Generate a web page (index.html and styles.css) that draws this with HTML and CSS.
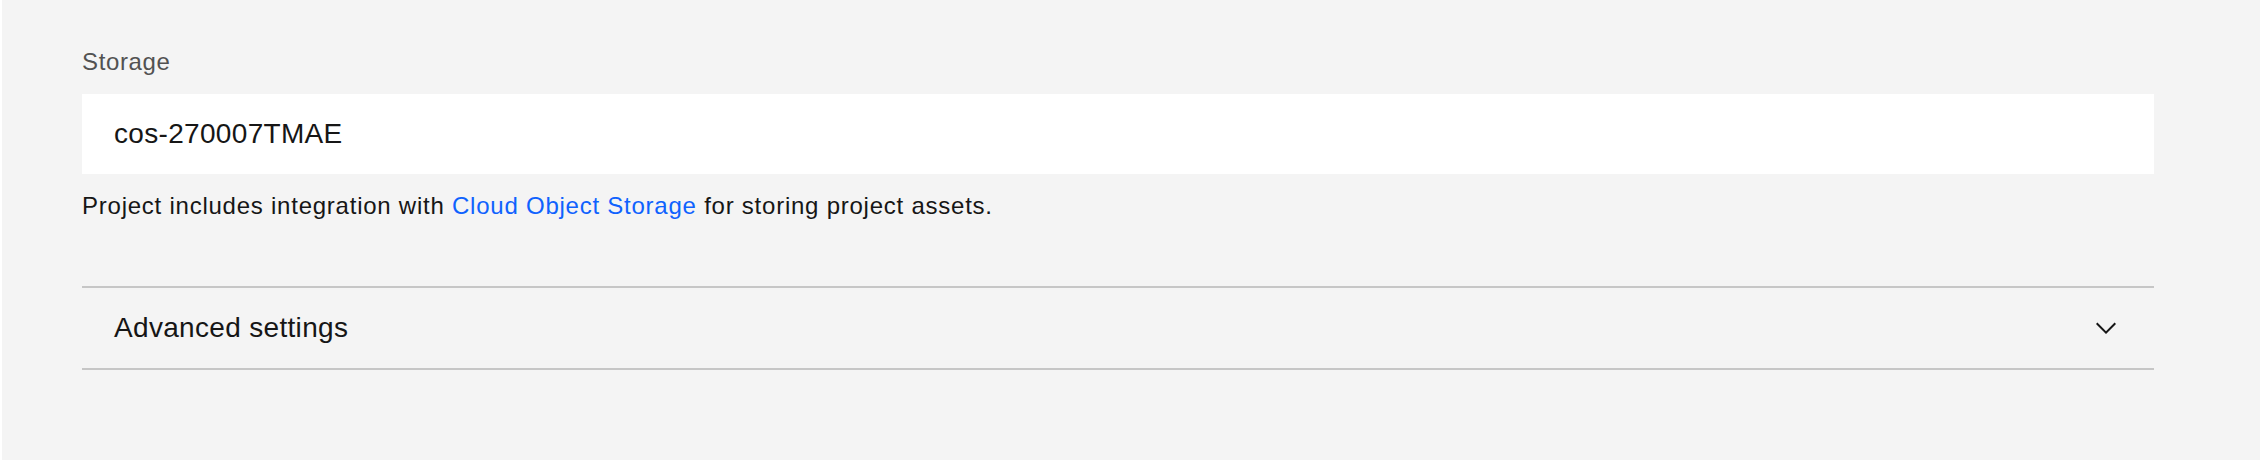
FILE: index.html
```html
<!DOCTYPE html>
<html lang="en">
<head>
<meta charset="utf-8">
<title>Storage</title>
<link rel="stylesheet" href="styles.css">
</head>
<body>
<main class="page">
  <div class="field">
    <label class="field-label" for="storage">Storage</label>
    <div class="field-input" id="storage">cos-270007TMAE</div>
    <p class="field-helper">Project includes integration with <a class="link" href="#">Cloud Object Storage</a> for storing project assets.</p>
  </div>
  <section class="accordion">
    <button class="accordion-heading" type="button">
      <span class="accordion-title">Advanced settings</span>
      <svg class="accordion-arrow" viewBox="0 0 16 16" width="32" height="32" aria-hidden="true">
        <path d="M8 11L3 6 3.7 5.3 8 9.6 12.3 5.3 13 6z" fill="#161616"/>
      </svg>
    </button>
  </section>
</main>
</body>
</html>
```

FILE: styles.css
```css
* {
  box-sizing: border-box;
}

html, body {
  margin: 0;
  padding: 0;
  height: 100%;
}

body {
  font-family: "Liberation Sans", Arial, sans-serif;
  color: #161616;
  background: #f4f4f4;
}

.page {
  min-height: 460px;
  background: #f4f4f4;
  border-left: 2px solid #ffffff;
  padding: 46px 106px 0 80px;
  display: flex;
  flex-direction: column;
}

.field {
  display: flex;
  flex-direction: column;
}

.field-label {
  font-size: 24px;
  line-height: 32px;
  letter-spacing: 0.64px;
  color: #525252;
  margin-bottom: 16px;
}

.field-input {
  height: 80px;
  background: #ffffff;
  padding: 0 32px;
  display: flex;
  align-items: center;
  font-size: 28px;
  line-height: 36px;
  letter-spacing: 0.32px;
  color: #161616;
}

.field-helper {
  margin: 16px 0 0;
  font-size: 24px;
  line-height: 32px;
  letter-spacing: 0.76px;
  color: #161616;
}

.link {
  color: #0f62fe;
  text-decoration: none;
}

.accordion {
  margin-top: 64px;
  border-top: 2px solid #c6c6c6;
  border-bottom: 2px solid #c6c6c6;
}

.accordion-heading {
  width: 100%;
  height: 80px;
  border: 0;
  margin: 0;
  padding: 0 32px;
  background: transparent;
  display: flex;
  align-items: center;
  justify-content: space-between;
  font-family: inherit;
  cursor: pointer;
}

.accordion-title {
  font-size: 28px;
  line-height: 40px;
  letter-spacing: 0.32px;
  color: #161616;
}

.accordion-arrow {
  flex: none;
  display: block;
}
```
